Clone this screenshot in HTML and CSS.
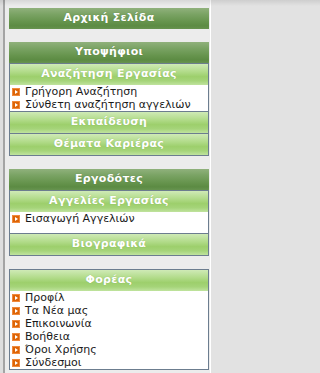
FILE: index.html
```html
<!DOCTYPE html>
<html lang="el">
<head>
<meta charset="utf-8">
<title>Μενού</title>
<link rel="stylesheet" href="styles.css">
</head>
<body>
<nav class="nav">
  <div class="bar-dark home">Αρχική Σελίδα</div>

  <section class="group">
    <div class="bar-dark">Υποψήφιοι</div>
    <div class="box">
      <div class="bar-light">Αναζήτηση Εργασίας</div>
      <ul class="items">
        <li><svg class="ico" viewBox="0 0 8 8"><rect x="0" y="0" width="8" height="8" fill="#dd6406"/><rect x="0.5" y="0.5" width="7" height="7" fill="none" stroke="#f08a3c" stroke-width="1"/><path d="M3 2 L6 4 L3 6 Z" fill="#fff"/></svg>Γρήγορη Αναζήτηση</li>
        <li><svg class="ico" viewBox="0 0 8 8"><rect x="0" y="0" width="8" height="8" fill="#dd6406"/><rect x="0.5" y="0.5" width="7" height="7" fill="none" stroke="#f08a3c" stroke-width="1"/><path d="M3 2 L6 4 L3 6 Z" fill="#fff"/></svg>Σύνθετη αναζήτηση αγγελιών</li>
      </ul>
      <div class="bar-light sep">Εκπαίδευση</div>
      <div class="bar-light sep">Θέματα Καριέρας</div>
    </div>
  </section>

  <section class="group">
    <div class="bar-dark">Εργοδότες</div>
    <div class="box">
      <div class="bar-light">Αγγελίες Εργασίας</div>
      <ul class="items padded">
        <li><svg class="ico" viewBox="0 0 8 8"><rect x="0" y="0" width="8" height="8" fill="#dd6406"/><rect x="0.5" y="0.5" width="7" height="7" fill="none" stroke="#f08a3c" stroke-width="1"/><path d="M3 2 L6 4 L3 6 Z" fill="#fff"/></svg>Εισαγωγή Αγγελιών</li>
      </ul>
      <div class="bar-light sep">Βιογραφικά</div>
    </div>
  </section>

  <section class="group">
    <div class="box">
      <div class="bar-light">Φορέας</div>
      <ul class="items">
        <li><svg class="ico" viewBox="0 0 8 8"><rect x="0" y="0" width="8" height="8" fill="#dd6406"/><rect x="0.5" y="0.5" width="7" height="7" fill="none" stroke="#f08a3c" stroke-width="1"/><path d="M3 2 L6 4 L3 6 Z" fill="#fff"/></svg>Προφίλ</li>
        <li><svg class="ico" viewBox="0 0 8 8"><rect x="0" y="0" width="8" height="8" fill="#dd6406"/><rect x="0.5" y="0.5" width="7" height="7" fill="none" stroke="#f08a3c" stroke-width="1"/><path d="M3 2 L6 4 L3 6 Z" fill="#fff"/></svg>Τα Νέα μας</li>
        <li><svg class="ico" viewBox="0 0 8 8"><rect x="0" y="0" width="8" height="8" fill="#dd6406"/><rect x="0.5" y="0.5" width="7" height="7" fill="none" stroke="#f08a3c" stroke-width="1"/><path d="M3 2 L6 4 L3 6 Z" fill="#fff"/></svg>Επικοινωνία</li>
        <li><svg class="ico" viewBox="0 0 8 8"><rect x="0" y="0" width="8" height="8" fill="#dd6406"/><rect x="0.5" y="0.5" width="7" height="7" fill="none" stroke="#f08a3c" stroke-width="1"/><path d="M3 2 L6 4 L3 6 Z" fill="#fff"/></svg>Βοήθεια</li>
        <li><svg class="ico" viewBox="0 0 8 8"><rect x="0" y="0" width="8" height="8" fill="#dd6406"/><rect x="0.5" y="0.5" width="7" height="7" fill="none" stroke="#f08a3c" stroke-width="1"/><path d="M3 2 L6 4 L3 6 Z" fill="#fff"/></svg>Όροι Χρήσης</li>
        <li><svg class="ico" viewBox="0 0 8 8"><rect x="0" y="0" width="8" height="8" fill="#dd6406"/><rect x="0.5" y="0.5" width="7" height="7" fill="none" stroke="#f08a3c" stroke-width="1"/><path d="M3 2 L6 4 L3 6 Z" fill="#fff"/></svg>Σύνδεσμοι</li>
      </ul>
    </div>
  </section>
</nav>
</body>
</html>
```

FILE: styles.css
```css
html, body {
  margin: 0;
  height: 100%;
}

body {
  font-family: "DejaVu Sans", Verdana, sans-serif;
  font-size: 11px;
  color: #1a1a1a;
  background:
    linear-gradient(to bottom, rgba(0, 0, 0, 0.09), rgba(0, 0, 0, 0) 6px),
    linear-gradient(to right,
      #dedede 0, #dedede 3px,
      #a4a4a4 3px, #a4a4a4 5px,
      #ececec 5px, #ececec 210px,
      #ffffff 210px, #ffffff 211px,
      #e2e2e2 211px);
}

.nav {
  width: 200px;
  padding: 8px 0 0 9px;
}

.home {
  margin-bottom: 13px;
}

.group {
  margin-bottom: 13px;
}

.bar-dark {
  height: 21px;
  line-height: 20px;
  text-align: center;
  color: #ffffff;
  font-weight: bold;
  letter-spacing: 0.3px;
  text-shadow: 0 0 1px rgba(40, 70, 20, 0.35);
  background: linear-gradient(to bottom, #90b17c 0%, #7aa364 30%, #66944d 65%, #5c8b43 85%, #67934f 100%);
}

.box {
  border: 1px solid #6c7d8f;
  background: #ffffff;
}

.bar-light {
  height: 21px;
  line-height: 20px;
  text-align: center;
  color: #ffffff;
  font-weight: bold;
  letter-spacing: 0.3px;
  text-shadow: 0 0 1px rgba(60, 100, 30, 0.3);
  background: linear-gradient(to bottom, #cfeab6 0%, #b3dc8c 35%, #9dcf6c 60%, #a5d479 80%, #c0e39e 100%);
}

.sep {
  border-top: 1px solid #6c7d8f;
}

.items {
  list-style: none;
  margin: 0;
  padding: 0 0 0 2px;
}

.items.padded {
  padding-bottom: 8px;
}

.items li {
  display: flex;
  align-items: center;
  gap: 5px;
  height: 13px;
  line-height: 13px;
  white-space: nowrap;
}

.ico {
  width: 8px;
  height: 8px;
  flex: none;
}
```
